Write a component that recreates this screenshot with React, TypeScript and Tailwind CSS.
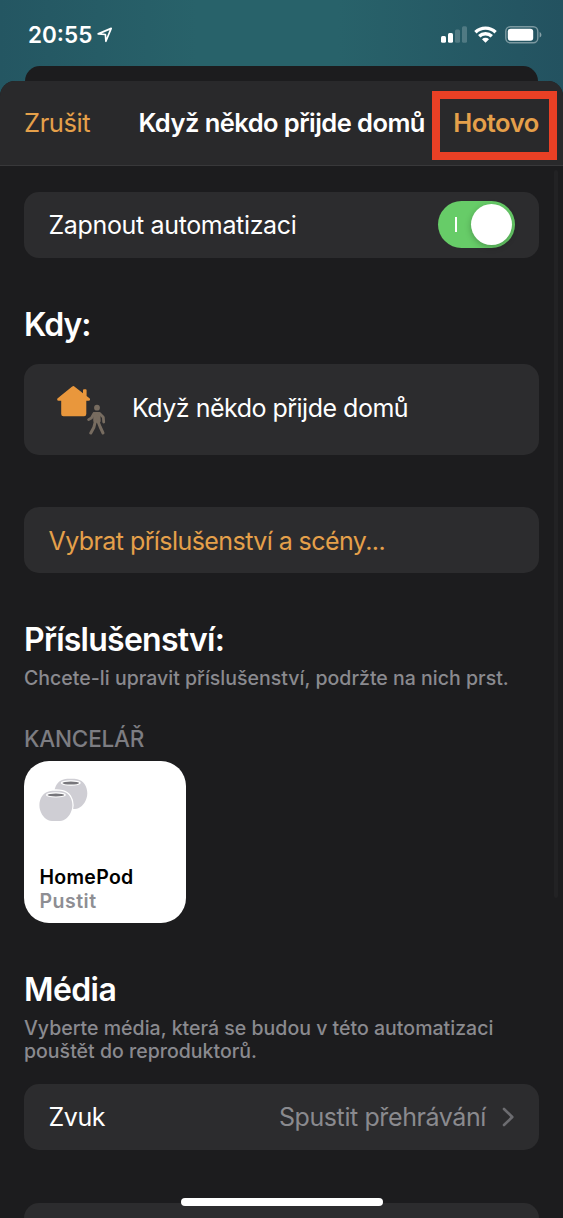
import React from "react";

function LocationArrow() {
  return (
    <svg className="ml-[5px] h-4 w-4" viewBox="0 0 16 16" fill="none">
      <path d="M1.2 6.9 L14.2 1.4 L8.9 14.3 L8.4 7.5 Z" stroke="white" strokeWidth="1.7" strokeLinejoin="round" />
    </svg>
  );
}

function SignalBars() {
  return (
    <svg className="h-[17px] w-[27px]" viewBox="0 0 27 17" fill="white">
      <rect x="0" y="10" width="5" height="6.7" rx="1.5" />
      <rect x="7" y="7" width="5" height="9.7" rx="1.5" />
      <rect x="14" y="3.6" width="5" height="13.1" rx="1.5" opacity="0.2" />
      <rect x="21" y="0.3" width="5" height="16.4" rx="1.5" opacity="0.2" />
    </svg>
  );
}

function Wifi() {
  return (
    <svg className="h-[17px] w-[23px]" viewBox="0 0 23 17" fill="none" stroke="white" strokeWidth="3.3">
      <path d="M1.4 6.2 A14.4 14.4 0 0 1 21.6 6.2" />
      <path d="M5.2 10.3 A9 9 0 0 1 17.8 10.3" />
      <path d="M11.5 16.8 L8 13.2 A5 5 0 0 1 15 13.2 Z" fill="white" stroke="none" />
    </svg>
  );
}

function Battery() {
  return (
    <svg className="h-[18px] w-[38px]" viewBox="0 0 38 18" fill="none">
      <rect x="0.8" y="0.8" width="32" height="16" rx="4.5" stroke="white" strokeOpacity="0.4" strokeWidth="1.4" />
      <rect x="2.8" y="2.8" width="25.4" height="12" rx="2.8" fill="white" />
      <path d="M34.6 6 C37 7 37 10.6 34.6 11.6 Z" fill="white" fillOpacity="0.45" />
    </svg>
  );
}

function StatusBar() {
  return (
    <div className="flex h-[66px] shrink-0 items-start justify-between pl-[28px] pr-[20px]">
      <div className="flex items-center pt-[20.5px]">
        <span className="text-[22.5px] leading-7 font-semibold">20:55</span>
        <LocationArrow />
      </div>
      <div className="flex pt-[26px]">
        <SignalBars />
        <div className="ml-[6px]">
          <Wifi />
        </div>
        <div className="ml-[8px]">
          <Battery />
        </div>
      </div>
    </div>
  );
}

function ArriveHomeIcon() {
  return (
    <svg className="h-[50px] w-[50px]" viewBox="0 0 50 50">
      <path
        d="M17.7 1 L27 8.2 V5.2 Q27 4.2 28 4.2 H29.6 Q30.6 4.2 30.6 5.2 V11 L33.8 13.5 Q34.6 15.7 32.6 15.7 H30.3 V29 Q30.3 31.2 28.1 31.2 H7.4 Q5.2 31.2 5.2 29 V15.7 H2.6 Q0.6 15.7 1.4 13.5 L15.9 1.8 Q16.8 1 17.7 1 Z"
        fill="#e9973c"
      />
      <g stroke="#776c60" fill="none" strokeLinecap="round" strokeLinejoin="round">
        <circle cx="41" cy="22.7" r="2.9" fill="#776c60" stroke="none" />
        <path d="M38.8 28.6 L42.6 28.6 L43 36 L39 36 Z" fill="#776c60" strokeWidth="3.4" />
        <path d="M38 28.4 L35.4 33 L32.6 34.6" strokeWidth="2.8" />
        <path d="M43.6 28.6 L47.3 32.2 L47.7 37" strokeWidth="2.8" />
        <path d="M39.2 37 L37.8 42.6 L34.8 48" strokeWidth="3" />
        <path d="M42.2 37 L44.2 42 L47 48" strokeWidth="3" />
      </g>
    </svg>
  );
}

const podPath =
  "M10 0.3 C13 -0.3 20 -0.3 23 0.3 C29.5 1.6 33 7.5 33 14.3 C33 21 29 27 24 29.3 Q22.6 30 20.5 30 H12.5 Q10.4 30 9 29.3 C4 27 0 21 0 14.3 C0 7.5 3.5 1.6 10 0.3 Z";

function Pod({ x, y }: { x: number; y: number }) {
  return (
    <g transform={`translate(${x} ${y})`}>
      <path d={podPath} fill="#cfced4" stroke="white" strokeWidth="2.6" paintOrder="stroke" />
      <ellipse cx="16.5" cy="4" rx="10" ry="2.7" fill="white" />
      <ellipse cx="16.5" cy="4.1" rx="8.4" ry="1.5" fill="#77767b" />
    </g>
  );
}

function HomePodIcon() {
  return (
    <svg className="-ml-px h-[46px] w-[50px]" viewBox="0 0 50 46">
      <Pod x={15.3} y={1} />
      <Pod x={0.4} y={12.9} />
    </svg>
  );
}

function Toggle() {
  return (
    <div className="mb-px flex h-[47px] w-[77px] items-center justify-between rounded-full bg-[#67cc68] pr-[3px] pl-[17px]">
      <div className="h-[15px] w-[1.5px] bg-white" />
      <div className="h-[41px] w-[41px] rounded-full bg-white shadow-[0_2px_6px_rgba(0,0,0,0.25)]" />
    </div>
  );
}

function Row({ className, children }: { className: string; children?: React.ReactNode }) {
  return (
    <div className={`flex items-center rounded-[15px] bg-[#2c2c2e] pr-6 pl-[24.5px] text-[25px] leading-8 ${className}`}>
      {children}
    </div>
  );
}

function Heading({ className, children }: { className: string; children: React.ReactNode }) {
  return <h2 className={`text-[32px] leading-10 font-semibold whitespace-nowrap ${className}`}>{children}</h2>;
}

function App() {
  return (
    <div
      className="relative flex h-[1218px] w-[563px] flex-col overflow-hidden bg-[linear-gradient(90deg,#245662_0%,#28626a_35%,#28626a_60%,#235260_100%)] text-white"
      style={{ fontFamily: 'Inter, "Liberation Sans", sans-serif' }}
    >
      <StatusBar />
      <div className="mx-[25px] h-[15px] shrink-0 rounded-t-[18px] bg-[#1c1c1e]" />

      <div className="flex min-h-0 flex-1 flex-col overflow-hidden rounded-t-[15px] bg-[#1c1c1e]">
        <header className="flex h-[85px] shrink-0 items-center border-b border-[#38383a] bg-[#29292b] pl-[24px] text-[25.5px] leading-8 whitespace-nowrap">
          <button className="w-[114.5px] text-left tracking-[-0.4px] text-[#e5a04a]">Zrušit</button>
          <h1 className="w-[293.5px] font-semibold tracking-[-0.55px]">Když někdo přijde domů</h1>
          <div className="mt-[4px] flex h-[69px] w-[125px] items-center justify-center border-[8px] border-[#ea4025]">
            <button className="mb-[4px] ml-[3px] font-semibold tracking-[-0.5px] text-[#e5a04a]">Hotovo</button>
          </div>
        </header>

        <main className="flex flex-col px-6 pt-[25.7px]">
          <Row className="h-[66px] shrink-0 justify-between">
            <span className="tracking-[-0.35px]">Zapnout automatizaci</span>
            <Toggle />
          </Row>

          <Heading className="mt-[46.9px] tracking-[-1px]">Kdy:</Heading>
          <Row className="mt-[19.9px] h-[90.5px]">
            <div className="ml-[7.5px] w-[76px]">
              <ArriveHomeIcon />
            </div>
            <span className="mb-[3px] tracking-[-0.5px]">Když někdo přijde domů</span>
          </Row>

          <Row className="mt-[52.5px] h-[66px] text-[#e5a04a]">
            <span className="mt-px tracking-[-0.57px]">Vybrat příslušenství a scény...</span>
          </Row>

          <Heading className="mt-[47px] tracking-[-0.75px]">Příslušenství:</Heading>
          <p className="mt-[7px] text-[19.5px] leading-[23px] font-medium tracking-[0.02px] whitespace-nowrap text-[#8a8a8f]">
            Chcete-li upravit příslušenství, podržte na nich prst.
          </p>

          <h3 className="mt-[35px] text-[22.5px] leading-7 font-medium tracking-[-0.2px] text-[#7d7d82]">KANCELÁŘ</h3>
          <div className="mt-[7.5px] flex h-[162px] w-[162px] flex-col justify-between rounded-[25px] bg-white pt-[17px] pb-[9.5px] pl-[15.5px] text-[19.5px] leading-6 font-semibold">
            <HomePodIcon />
            <div>
              <div className="tracking-[0.3px] text-black">HomePod</div>
              <div className="tracking-[0.5px] text-[#8e8e93]">Pustit</div>
            </div>
          </div>

          <Heading className="mt-[47.5px] tracking-[-0.6px]">Média</Heading>
          <p className="mt-[7px] text-[19.5px] leading-[23px] font-medium tracking-[0.02px] whitespace-nowrap text-[#8a8a8f]">
            Vyberte média, která se budou v této automatizaci
            <br />
            pouštět do reproduktorů.
          </p>
          <Row className="mt-[20.5px] h-[66px] justify-between">
            <span className="tracking-[-0.4px]">Zvuk</span>
            <div className="flex items-center">
              <span className="tracking-[-0.4px] text-[#8a8a8e]">Spustit přehrávání</span>
              <svg className="ml-[16px] h-5 w-[13px]" viewBox="0 0 13 20" fill="none">
                <path d="M2 2 L10.3 10 L2 18" stroke="#6c6c70" strokeWidth="2.6" strokeLinecap="round" strokeLinejoin="round" />
              </svg>
            </div>
          </Row>
          <Row className="mt-[53px] h-[66px] shrink-0" />
        </main>
      </div>

      {/* scroll indicator and home bar float above the sheet */}
      <div className="absolute top-[170px] right-[5px] h-[728px] w-[4px] rounded-full bg-[#222224]" />
      <div className="absolute top-[1198px] left-[181px] h-[8px] w-[202px] rounded-full bg-white" />
    </div>
  );
}

export default App;
